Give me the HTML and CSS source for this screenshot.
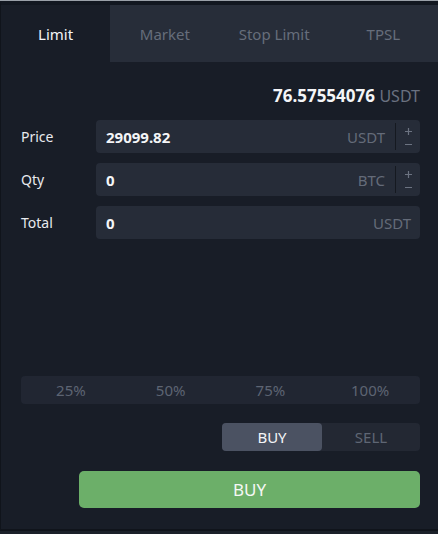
FILE: index.html
```html
<!DOCTYPE html>
<html>
<head>
<meta charset="utf-8">
<link rel="stylesheet" href="styles.css">
</head>
<body>
<div class="panel">
  <div class="tabs">
    <div class="tab active">Limit</div>
    <div class="tab">Market</div>
    <div class="tab">Stop Limit</div>
    <div class="tab">TPSL</div>
  </div>
  <div class="content">
    <div class="balance"><span class="amount">76.57554076</span> <span class="cur">USDT</span></div>
    <div class="fields">
      <div class="row">
        <div class="label">Price</div>
        <div class="input">
          <span class="value">29099.82</span>
          <span class="unit">USDT</span>
          <span class="stepper">
            <svg width="9" height="24" viewBox="0 0 9 24"><path d="M4.5 3v7M1 6.5h7M1 19.5h7" stroke="currentColor" stroke-width="1.2" fill="none"/></svg>
          </span>
        </div>
      </div>
      <div class="row">
        <div class="label">Qty</div>
        <div class="input">
          <span class="value">0</span>
          <span class="unit">BTC</span>
          <span class="stepper">
            <svg width="9" height="24" viewBox="0 0 9 24"><path d="M4.5 3v7M1 6.5h7M1 19.5h7" stroke="currentColor" stroke-width="1.2" fill="none"/></svg>
          </span>
        </div>
      </div>
      <div class="row">
        <div class="label">Total</div>
        <div class="input">
          <span class="value">0</span>
          <span class="unit plain">USDT</span>
        </div>
      </div>
    </div>
    <div class="spacer"></div>
    <div class="pcts">
      <div>25%</div><div>50%</div><div>75%</div><div>100%</div>
    </div>
    <div class="toggle-row">
      <div class="toggle">
        <div class="opt on">BUY</div>
        <div class="opt">SELL</div>
      </div>
    </div>
    <div class="submit-row">
      <button class="submit">BUY</button>
    </div>
  </div>
</div>
</body>
</html>
```
FILE: styles.css
```css
html { background: #1b2029; }
body {
  margin: 0;
  font-family: "Noto Sans", "Open Sans", sans-serif;
  border-top: 1px solid #9aa0a8;
}
.panel {
  background: #181d27;
  border-top: 4px solid #121720;
  border-left: 1px solid #10141b;
  border-bottom: 2px solid #10141b;
  height: 530px;
  box-sizing: border-box;
  display: flex;
  flex-direction: column;
}
.tabs {
  display: grid;
  grid-template-columns: repeat(4, 1fr);
  height: 57px;
  background: #272d39;
}
.tab {
  display: flex;
  align-items: center;
  justify-content: center;
  color: #666d7b;
  font-size: 15px;
}
.tab.active {
  background: #181d27;
  color: #f2f4f7;
}
.content {
  flex: 1;
  display: flex;
  flex-direction: column;
  padding: 0 18px 21px 20px;
}
.balance {
  text-align: right;
  margin-top: 22px;
  font-size: 17px;
  line-height: 24px;
  color: #f4f5f7;
}
.balance .amount { font-weight: 700; }
.balance .cur { color: #6a7180; font-size: 16px; }
.fields {
  margin-top: 12px;
  display: flex;
  flex-direction: column;
  gap: 10px;
}
.row {
  display: flex;
  align-items: center;
}
.label {
  width: 75px;
  color: #e8eaee;
  font-size: 14px;
}
.input {
  flex: 1;
  height: 33px;
  background: #262c38;
  border-radius: 4px;
  display: flex;
  align-items: center;
  padding-left: 10px;
}
.value {
  flex: 1;
  color: #f4f5f7;
  font-weight: 700;
  font-size: 15px;
}
.unit {
  color: #646b79;
  font-size: 15px;
  padding-right: 10px;
}
.unit.plain { padding-right: 9px; }
.stepper {
  width: 24px;
  align-self: stretch;
  margin: 3px 0;
  border-left: 1px solid #151920;
  display: flex;
  align-items: center;
  justify-content: center;
  color: #6c7381;
}
.stepper svg { display: block; }
.spacer { flex: 1; }
.pcts {
  height: 28px;
  background: #212632;
  border-radius: 4px;
  display: grid;
  grid-template-columns: repeat(4, 1fr);
  align-items: center;
  text-align: center;
  color: #5d6472;
  font-size: 15px;
}
.toggle-row {
  display: flex;
  justify-content: flex-end;
  margin-top: 19px;
}
.toggle {
  width: 198px;
  height: 28px;
  background: #232833;
  border-radius: 4px;
  display: grid;
  grid-template-columns: 100px 1fr;
}
.opt {
  display: flex;
  align-items: center;
  justify-content: center;
  color: #5f6674;
  font-size: 15px;
  border-radius: 4px;
}
.opt.on {
  background: #4b5262;
  color: #f4f5f7;
}
.submit-row {
  display: flex;
  justify-content: flex-end;
  margin-top: 20px;
}
.submit {
  width: 341px;
  height: 37px;
  border: 0;
  border-radius: 5px;
  background: #6caf69;
  color: #f5f7f5;
  font-family: "Noto Sans", "Open Sans", sans-serif;
  font-size: 17px;
}
```
